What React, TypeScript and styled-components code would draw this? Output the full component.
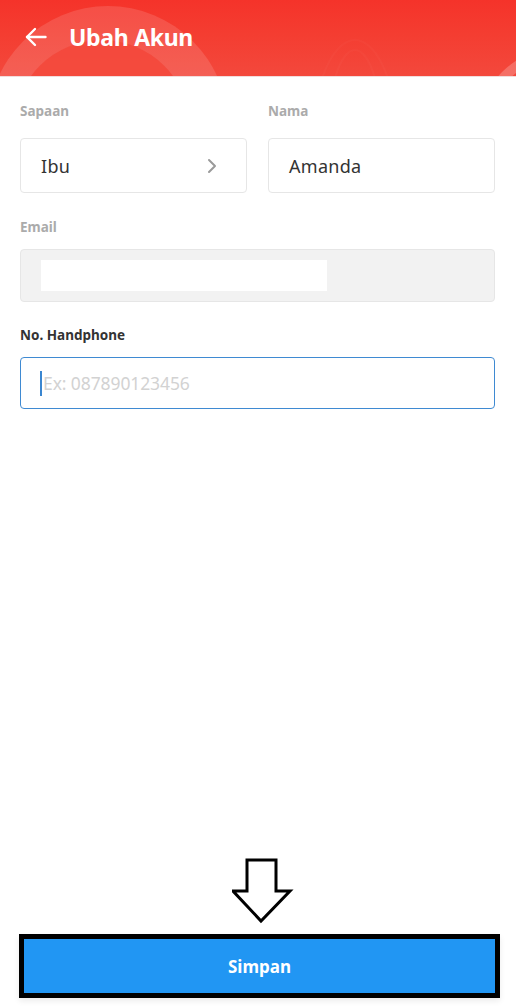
import React from "react";
import styled, { createGlobalStyle } from "styled-components";

const Global = createGlobalStyle`
  html, body { margin: 0; padding: 0; background: #ffffff; }
  body { font-family: "Fira Sans", "Noto Sans", "Open Sans", sans-serif; }
  * { box-sizing: border-box; }
`;

const Page = styled.div`
  width: 516px;
  height: 1008px;
  display: flex;
  flex-direction: column;
  background: #fff;
  overflow: hidden;
`;

const Header = styled.header`
  position: relative;
  height: 77px;
  flex: none;
  display: flex;
  align-items: center;
  gap: 21px;
  padding: 0 0 2px 24px;
  background: linear-gradient(180deg, #f5332a 0%, #f43d31 45%, #f3483c 100%);
  border-bottom: 1px solid #f1dcdc;
  overflow: hidden;
`;

const Decor = styled.svg`
  position: absolute;
  inset: 0;
  pointer-events: none;
`;

const BackButton = styled.button`
  position: relative;
  border: 0;
  background: transparent;
  padding: 0;
  width: 24px;
  height: 24px;
  display: flex;
  align-items: center;
  justify-content: center;
  cursor: pointer;
`;

const Title = styled.h1`
  position: relative;
  margin: 0;
  color: #fff;
  font-family: "Noto Sans", sans-serif;
  font-weight: 700;
  font-size: 23px;
  letter-spacing: -0.3px;
`;

const Form = styled.div`
  display: flex;
  flex-direction: column;
  padding: 25px 21px 0 20px;
`;

const Row = styled.div`
  display: grid;
  grid-template-columns: 1fr 1fr;
  column-gap: 21px;
`;

const Field = styled.div<{ $gap: number; $mt?: number }>`
  display: flex;
  flex-direction: column;
  gap: ${(p) => p.$gap}px;
  margin-top: ${(p) => p.$mt ?? 0}px;
`;

const Label = styled.label<{ $dark?: boolean }>`
  font-family: "Noto Sans", sans-serif;
  font-size: 13.5px;
  line-height: 18px;
  font-weight: 700;
  color: ${(p) => (p.$dark ? "#333333" : "#ababab")};
`;

const Box = styled.div<{ $h: number; $disabled?: boolean; $focus?: boolean }>`
  height: ${(p) => p.$h}px;
  border-radius: 4px;
  border: ${(p) => (p.$focus ? "1.5px solid #3f8ad2" : "1px solid #e6e6e6")};
  background: ${(p) => (p.$disabled ? "#f2f2f2" : "#ffffff")};
  display: flex;
  align-items: center;
  padding: 0 ${(p) => (p.$focus ? 19 : 20)}px;
  font-family: "Noto Sans", sans-serif;
  font-size: 18px;
  color: #333;
`;

const Value = styled.span`
  flex: 1;
  letter-spacing: 0.3px;
`;

const Redacted = styled.div`
  width: 286px;
  height: 31px;
  background: #ffffff;
`;

const Caret = styled.span`
  width: 2px;
  height: 25px;
  background: #3a86d0;
  margin-right: 1px;
`;

const Placeholder = styled.span`
  color: #d2d2d2;
  font-size: 17.5px;
  letter-spacing: -0.1px;
`;

const Spacer = styled.div`
  flex: 1;
`;

const Footer = styled.div`
  display: flex;
  flex-direction: column;
  align-items: center;
  padding: 0 16px 10px 19px;
`;

const ArrowMark = styled.svg`
  display: block;
  margin-bottom: 10px;
  margin-left: 6px;
`;

const SaveButton = styled.button`
  width: 481px;
  height: 64px;
  border: 5px solid #000;
  background: #2196f3;
  color: #fff;
  font-family: "Noto Sans", sans-serif;
  font-weight: 700;
  font-size: 17px;
  box-shadow: 0 3px 6px rgba(0, 0, 0, 0.08);
  cursor: pointer;
`;

export default function App() {
  return (
    <>
      <Global />
      <Page>
        <Header>
          <Decor width="516" height="77" viewBox="0 0 516 77">
            <circle cx="108" cy="126" r="120" fill="rgba(255,255,255,0.13)" />
            <circle cx="102" cy="128" r="88" fill="#f3463a" opacity="0.85" />
            <g fill="none" stroke="rgba(255,255,255,0.025)" strokeWidth="2">
              <ellipse cx="355" cy="160" rx="45" ry="120" />
              <ellipse cx="355" cy="160" rx="30" ry="110" />
            </g>
            <circle cx="565" cy="135" r="84" fill="none" stroke="rgba(255,255,255,0.22)" strokeWidth="10" />
          </Decor>
          <BackButton aria-label="Kembali">
            <svg width="22" height="20" viewBox="0 0 22 20" fill="none" stroke="#fff" strokeWidth="2.4" strokeLinecap="round" strokeLinejoin="round">
              <path d="M20.5 10H2" />
              <path d="M10 2L2 10l8 8" />
            </svg>
          </BackButton>
          <Title>Ubah Akun</Title>
        </Header>

        <Form>
          <Row>
            <Field $gap={18}>
              <Label>Sapaan</Label>
              <Box $h={55}>
                <Value>Ibu</Value>
                <svg width="12" height="16" viewBox="0 0 12 16" fill="none" stroke="#9a9a9a" strokeWidth="2" strokeLinecap="round" strokeLinejoin="round" style={{ marginRight: 8 }}>
                  <path d="M3 2l6 6-6 6" />
                </svg>
              </Box>
            </Field>
            <Field $gap={18}>
              <Label>Nama</Label>
              <Box $h={55}>
                <Value>Amanda</Value>
              </Box>
            </Field>
          </Row>

          <Field $gap={13} $mt={25}>
            <Label>Email</Label>
            <Box $h={53} $disabled>
              <Redacted />
            </Box>
          </Field>

          <Field $gap={13} $mt={24}>
            <Label $dark>No. Handphone</Label>
            <Box $h={52} $focus>
              <Caret />
              <Placeholder>Ex: 087890123456</Placeholder>
            </Box>
          </Field>
        </Form>

        <Spacer />

        <Footer>
          <ArrowMark width="62" height="66" viewBox="0 0 62 66">
            <path d="M15 2h29v31h14L29 63 1 33h14z" fill="#fff" stroke="#000" strokeWidth="3" strokeLinejoin="miter" />
          </ArrowMark>
          <SaveButton>Simpan</SaveButton>
        </Footer>
      </Page>
    </>
  );
}
